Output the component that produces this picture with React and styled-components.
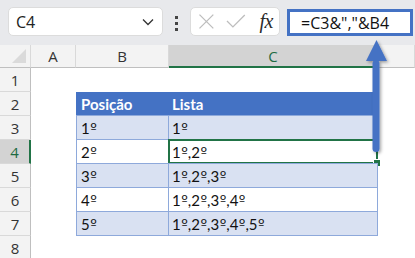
import React from "react";
import styled, { createGlobalStyle } from "styled-components";

const Global = createGlobalStyle`
  html, body { margin: 0; padding: 0; background: #ffffff; }
  body { width: 415px; height: 258px; overflow: hidden; }
`;

const Page = styled.div`
  position: relative;
  width: 415px;
  height: 258px;
  overflow: hidden;
  background: #ffffff;
`;

const Toolbar = styled.div`
  display: flex;
  align-items: flex-start;
  height: 45px;
  box-sizing: border-box;
  padding: 7px 0 0 8px;
  background: #e8e9ec;
`;

const NameBox = styled.div`
  display: flex;
  align-items: center;
  justify-content: space-between;
  box-sizing: border-box;
  width: 155px;
  height: 29px;
  padding: 0 8px 0 7px;
  background: #ffffff;
  border: 1px solid #dcdcdc;
  border-radius: 5px;
  font-family: "Open Sans", "Liberation Sans", sans-serif;
  font-size: 16px;
  color: #222;
`;

const Dots = styled.div`
  display: flex;
  flex-direction: column;
  gap: 3px;
  width: 27px;
  align-items: center;
  padding-top: 9px;
  span {
    width: 3px;
    height: 3px;
    background: #444;
  }
`;

const FxBox = styled.div`
  display: flex;
  align-items: center;
  box-sizing: border-box;
  width: 90px;
  height: 29px;
  padding: 0 6px 0 7px;
  gap: 11px;
  background: #ffffff;
  border: 1px solid #dcdcdc;
  border-radius: 5px;
`;

const Fx = styled.span`
  margin-left: 3px;
  font-family: "Liberation Serif", serif;
  font-style: italic;
  font-size: 20px;
  color: #2b2b2b;
  letter-spacing: -0.5px;
`;

const Formula = styled.div`
  box-sizing: border-box;
  margin-left: 7px;
  margin-top: 2px;
  width: 126px;
  height: 27px;
  padding: 0 0 0 11px;
  display: flex;
  align-items: center;
  border: 3px solid #4472c4;
  background: #ffffff;
  font-family: "Open Sans", "Liberation Sans", sans-serif;
  font-size: 16px;
  color: #111;
`;

const Sheet = styled.div`
  display: grid;
  grid-template-columns: 31px 45px 93px 209px 1fr;
  grid-template-rows: 23px repeat(8, 24px);
`;

const Corner = styled.div`
  position: relative;
  background: #f3f3f3;
  border-right: 1px solid #d9d9d9;
  border-bottom: 1px solid #bfbfbf;
  box-sizing: border-box;
  &::after {
    content: "";
    position: absolute;
    right: 4px;
    bottom: 4px;
    border-style: solid;
    border-width: 0 0 14px 14px;
    border-color: transparent transparent #dadada transparent;
  }
`;

const ColHead = styled.div`
  display: flex;
  align-items: center;
  justify-content: center;
  box-sizing: border-box;
  background: ${(p) => (p.$active ? "#d3d3d3" : "#f3f3f3")};
  border-right: 1px solid ${(p) => (p.$active ? "#bfbfbf" : "#d9d9d9")};
  border-bottom: ${(p) => (p.$active ? "2px solid #217346" : "1px solid #bfbfbf")};
  font-family: "Open Sans", "Liberation Sans", sans-serif;
  font-size: 15px;
  color: ${(p) => (p.$active ? "#1e6b43" : "#333")};
`;

const RowHead = styled.div`
  display: flex;
  align-items: center;
  justify-content: center;
  box-sizing: border-box;
  background: ${(p) => (p.$active ? "#d3d3d3" : "#f3f3f3")};
  border-bottom: 1px solid #d9d9d9;
  border-right: ${(p) => (p.$active ? "2px solid #217346" : "1px solid #bfbfbf")};
  font-family: "Open Sans", "Liberation Sans", sans-serif;
  font-size: 15px;
  color: ${(p) => (p.$active ? "#1e6b43" : "#333")};
`;

const Blank = styled.div`
  background: #ffffff;
`;

const Cell = styled.div`
  position: relative;
  display: flex;
  align-items: center;
  box-sizing: border-box;
  padding-left: ${(p) => (p.$first ? "4px" : "3px")};
  margin-left: ${(p) => (p.$first ? "0" : "-1px")};
  margin-top: ${(p) => (p.$top ? "0" : "-1px")};
  height: ${(p) => (p.$top ? "24px" : "25px")};
  border: 1px solid ${(p) => (p.$head ? "#4472c4" : "#8ea9db")};
  border-right-color: #8ea9db;
  background: ${(p) => (p.$head ? "#4472c4" : p.$band ? "#d9e1f2" : "#ffffff")};
  color: ${(p) => (p.$head ? "#ffffff" : "#111")};
  font-family: Lato, "Liberation Sans", sans-serif;
  font-weight: ${(p) => (p.$head ? 700 : 400)};
  font-size: 15px;
  white-space: nowrap;
`;

/* ordinal indicator drawn with an underlined glyph */
const Ord = styled.span`
  font-family: "DejaVu Sans", "Liberation Sans", sans-serif;
  font-size: 14px;
  margin-left: 0.5px;
`;

const Selection = styled.div`
  position: absolute;
  left: -1px;
  top: -1px;
  right: -1px;
  bottom: -1px;
  border: 2px solid #217346;
  pointer-events: none;
  &::after {
    content: "";
    position: absolute;
    right: -5px;
    bottom: -5px;
    width: 6px;
    height: 6px;
    background: #217346;
    border: 1px solid #ffffff;
  }
`;

const ArrowLayer = styled.svg`
  position: absolute;
  left: 355px;
  top: 30px;
  overflow: visible;
`;

const Chevron = () => (
  <svg width="12" height="8" viewBox="0 0 12 8">
    <path d="M1 1.5 L6 6.5 L11 1.5" fill="none" stroke="#333" strokeWidth="1.3" />
  </svg>
);

const Cross = () => (
  <svg width="17" height="17" viewBox="0 0 17 17">
    <path d="M1.5 1.5 L15.5 15.5 M15.5 1.5 L1.5 15.5" stroke="#bdbdbd" strokeWidth="1.3" />
  </svg>
);

const Check = () => (
  <svg width="20" height="15" viewBox="0 0 20 15">
    <path d="M1 7 L7 13 L19 1" fill="none" stroke="#bdbdbd" strokeWidth="1.3" />
  </svg>
);

const Text = ({ value }) =>
  value.split("º").map((part, i, all) => (
    <React.Fragment key={i}>
      {part}
      {i < all.length - 1 && <Ord>º</Ord>}
    </React.Fragment>
  ));

const columns = ["A", "B", "C", ""];
const rows = [
  null,
  ["Posição", "Lista"],
  ["1º", "1º"],
  ["2º", "1º,2º"],
  ["3º", "1º,2º,3º"],
  ["4º", "1º,2º,3º,4º"],
  ["5º", "1º,2º,3º,4º,5º"],
  null,
];

export default function App() {
  return (
    <Page>
      <Global />
      <Toolbar>
        <NameBox>
          <span>C4</span>
          <Chevron />
        </NameBox>
        <Dots>
          <span />
          <span />
          <span />
        </Dots>
        <FxBox>
          <Cross />
          <Check />
          <Fx>fx</Fx>
        </FxBox>
        <Formula>=C3&amp;","&amp;B4</Formula>
      </Toolbar>
      <Sheet>
        <Corner />
        {columns.map((c) => (
          <ColHead key={c || "d"} $active={c === "C"}>
            {c}
          </ColHead>
        ))}
        {rows.map((r, i) => {
          const n = i + 1;
          const head = n === 2;
          const band = n === 3 || n === 5 || n === 7;
          return (
            <React.Fragment key={n}>
              <RowHead $active={n === 4}>{n}</RowHead>
              <Blank />
              {r ? (
                <>
                  <Cell $first $top={head} $head={head} $band={band}>
                    <Text value={r[0]} />
                  </Cell>
                  <Cell $top={head} $head={head} $band={band}>
                    <Text value={r[1]} />
                    {n === 4 && <Selection />}
                  </Cell>
                </>
              ) : (
                <>
                  <Blank />
                  <Blank />
                </>
              )}
              <Blank />
            </React.Fragment>
          );
        })}
      </Sheet>
      <ArrowLayer width="44" height="130" viewBox="0 0 44 130">
        <defs>
          <filter id="shade" x="-50%" y="-20%" width="200%" height="140%">
            <feDropShadow dx="1.5" dy="1.5" stdDeviation="1.5" floodColor="#000" floodOpacity="0.35" />
          </filter>
        </defs>
        <g filter="url(#shade)" fill="#4472c4">
          <path d="M21.5 10 L32 31 L11 31 Z" />
          <rect x="17.5" y="30" width="7" height="92" rx="3.5" />
        </g>
      </ArrowLayer>
    </Page>
  );
}
